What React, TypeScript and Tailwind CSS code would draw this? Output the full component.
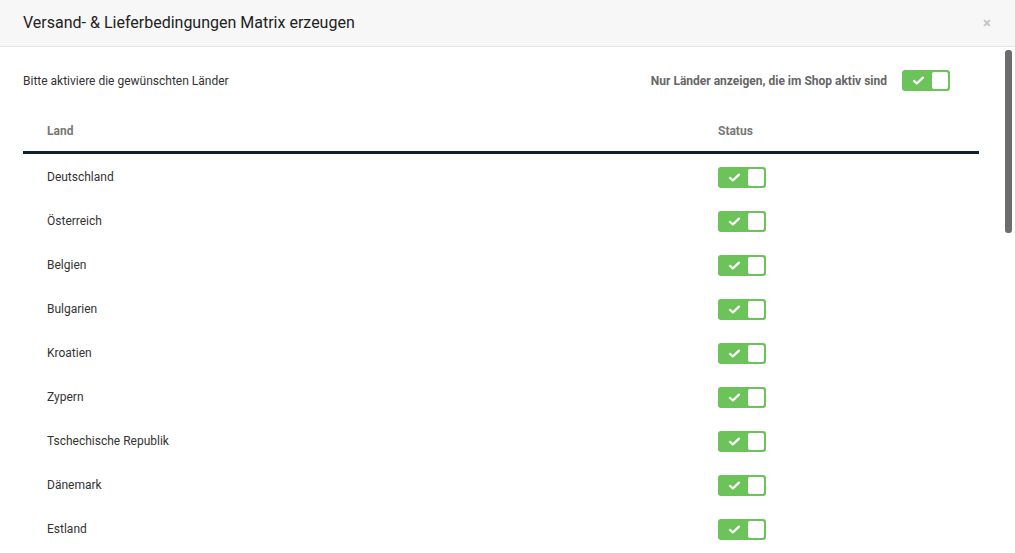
import React, { useState } from 'react';

const COUNTRIES = [
  'Deutschland',
  'Österreich',
  'Belgien',
  'Bulgarien',
  'Kroatien',
  'Zypern',
  'Tschechische Republik',
  'Dänemark',
  'Estland',
];

const Toggle = ({ on, onClick }: { on: boolean; onClick: () => void }) => (
  <button
    onClick={onClick}
    className={`relative flex h-[21px] w-[48px] items-center rounded-[3px] ${on ? 'bg-[#6bc35a]' : 'bg-[#d5d5d5]'}`}
  >
    {on && (
      <svg viewBox="0 0 16 16" className="ml-[10px] h-[13px] w-[13px]" fill="none" stroke="white" strokeWidth="2.8" strokeLinecap="round" strokeLinejoin="round">
        <path d="M2.5 8.5l3.5 3.2 7.5-7.2" />
      </svg>
    )}
    <span
      className={`absolute top-[2px] h-[17px] w-[16px] rounded-[2px] bg-white ${on ? 'right-[2px]' : 'left-[2px]'}`}
    />
  </button>
);

export default function App() {
  const [shopOnly, setShopOnly] = useState(true);
  const [active, setActive] = useState<Record<string, boolean>>(
    Object.fromEntries(COUNTRIES.map((c) => [c, true]))
  );

  return (
    <div className="relative h-[553px] w-[1015px] overflow-hidden bg-white font-['Roboto',sans-serif] text-[#333]">
      <div className="flex h-[47px] items-center justify-between border-b border-[#e6e6e6] bg-[#f7f7f7] pl-[23px] pr-[24px]">
        <h1 className="text-[16px] text-[#222]">Versand- &amp; Lieferbedingungen Matrix erzeugen</h1>
        <span className="text-[15px] font-bold leading-none text-[#c4c4c4]">×</span>
      </div>

      <div className="pl-[23px] pr-[36px]">
        <div className="flex h-[66px] items-center justify-between pt-[1px]">
          <span className="text-[12px] text-[#333]">Bitte aktiviere die gewünschten Länder</span>
          <div className="flex items-center gap-[15px] pr-[29px]">
            <span className="text-[12px] font-bold text-[#666]">Nur Länder anzeigen, die im Shop aktiv sind</span>
            <Toggle on={shopOnly} onClick={() => setShopOnly(!shopOnly)} />
          </div>
        </div>

        <div className="flex h-[41px] items-center border-b-[3px] border-[#0d2032] pb-[3px] text-[12px] font-bold text-[#777]">
          <span className="w-[695px] pl-[24px]">Land</span>
          <span>Status</span>
        </div>

        <ul className="pt-[1px]">
          {COUNTRIES.map((c) => (
            <li key={c} className="flex h-[44px] items-center text-[12px] text-[#333]">
              <span className="w-[695px] pl-[24px]">{c}</span>
              <Toggle on={active[c]} onClick={() => setActive({ ...active, [c]: !active[c] })} />
            </li>
          ))}
        </ul>
      </div>

      <div className="absolute right-[3px] top-[50px] h-[183px] w-[7px] rounded-[3px] bg-[#6c6c6c]" />
    </div>
  );
}
